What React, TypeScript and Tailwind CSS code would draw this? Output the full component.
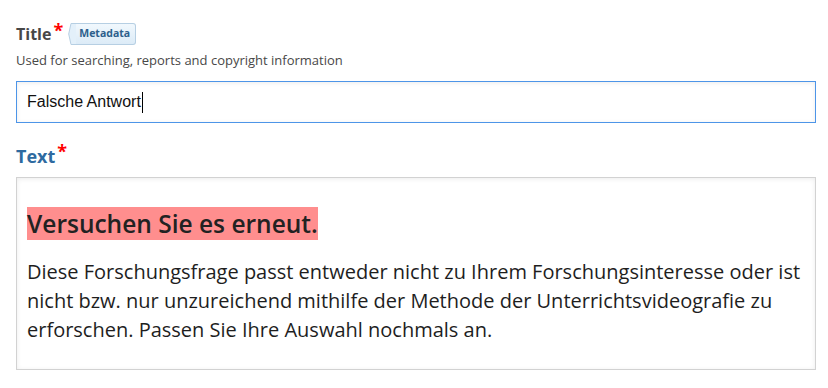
import React from "react";

const openSans = { fontFamily: '"Open Sans", "Noto Sans", sans-serif' };

function MetadataTag() {
  return (
    <span className="relative ml-[5px] inline-flex h-[22px] items-center">
      {/* pointy left side of the tag */}
      <svg width="9" height="22" viewBox="0 0 9 22" className="block">
        <path d="M9 0.5 L3 0.5 L0.7 11 L3 21.5 L9 21.5" fill="#e3f0fa" stroke="#b6cfe3" strokeWidth="1" />
      </svg>
      <span className="-ml-px flex h-[22px] items-center rounded-r-[3px] border border-l-0 border-[#b6cfe3] bg-gradient-to-b from-[#f1f8fd] to-[#dcebf7] pl-[3px] pr-[5px] text-[10.5px] font-bold text-[#2d5f8c]">
        Metadata
      </span>
    </span>
  );
}

export default function App() {
  return (
    <div className="h-[388px] w-[828px] bg-white pl-4 pr-3 pt-[23px]" style={openSans}>
      {/* Titel */}
      <div className="flex items-center">
        <span className="text-[16px] font-bold leading-[22px] text-[#474747]">Title</span>
        <span className="ml-[2px] -mt-[8px] text-[18px] font-bold leading-none text-[#ff0000]">*</span>
        <MetadataTag />
      </div>
      <p className="mt-[7px] text-[13px] leading-[17px] text-[#484848]">
        Used for searching, reports and copyright information
      </p>
      <div className="mt-[12px] flex h-[42px] items-center border border-[#4d95e8] bg-white px-[10px] shadow-[inset_0_1px_4px_rgba(0,0,0,0.08)]">
        <span className="text-[16px] text-[#111]" style={{ fontFamily: '"Liberation Sans", Arial, sans-serif' }}>
          Falsche Antwort
        </span>
        <span className="ml-px h-[21px] w-px bg-black" />
      </div>

      {/* Text */}
      <div className="mt-[21px] flex items-center">
        <span className="text-[18px] font-bold leading-[24px] text-[#2e6aa0]">Text</span>
        <span className="ml-[2px] -mt-[10px] text-[18px] font-bold leading-none text-[#ff0000]">*</span>
      </div>
      <div className="mt-[9px] h-[193px] border border-[#d2d2d2] bg-white px-[10px] pt-[29px] shadow-[inset_0_1px_5px_rgba(0,0,0,0.08)]">
        <h2 className="text-[24.5px] font-semibold leading-[34px] text-[#222]">
          <span className="bg-[#ff8e8e]">Versuchen Sie es erneut.</span>
        </h2>
        <p className="mt-[16px] text-[20px] leading-[29px] text-[#1e1e1e]">
          Diese Forschungsfrage passt entweder nicht zu Ihrem Forschungsinteresse oder ist nicht bzw. nur unzureichend
          mithilfe der Methode der Unterrichtsvideografie zu erforschen. Passen Sie Ihre Auswahl nochmals an.
        </p>
      </div>
    </div>
  );
}
